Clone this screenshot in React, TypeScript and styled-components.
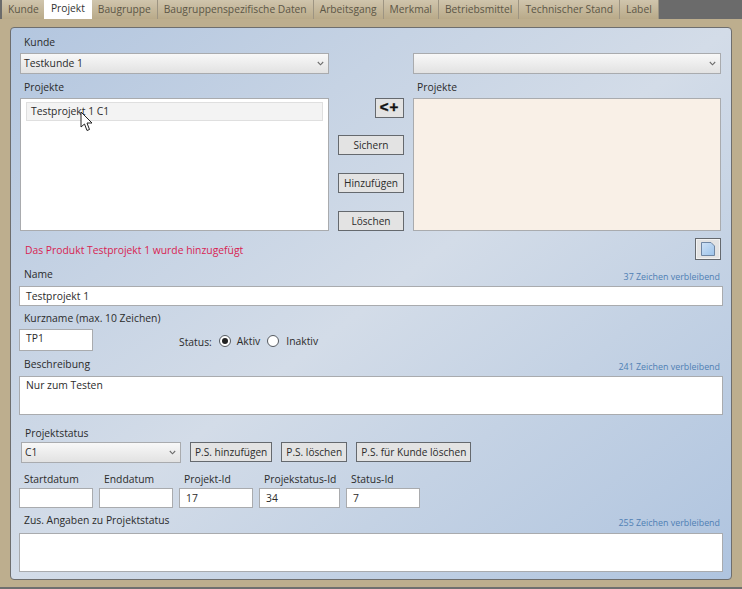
import React from "react";
import styled, { createGlobalStyle } from "styled-components";

const GlobalStyle = createGlobalStyle`
  html, body {
    margin: 0;
    padding: 0;
    height: 100%;
    overflow: hidden;
  }
  body {
    font-family: "Open Sans", "Noto Sans", sans-serif;
    font-size: 10.35px;
    color: #2b2b2b;
  }
`;

const Page = styled.div`
  width: 742px;
  height: 589px;
  background: #bdae8e;
  box-sizing: border-box;
  border-bottom: 2px solid #6f6f6f;
  position: relative;
`;

const TabBar = styled.div`
  height: 19px;
  background: #6b6b6b;
  display: flex;
  padding-left: 2px;
`;

const Tab = styled.div<{ $active?: boolean }>`
  height: 19px;
  font-size: 10.25px;
  line-height: ${(p) => (p.$active ? 17 : 18)}px;
  padding: 0 ${(p) => (p.$active ? 7 : 6)}px;
  margin: ${(p) => (p.$active ? "0 -1px 0 -2px" : "0")};
  color: ${(p) => (p.$active ? "#333" : "#5c5646")};
  background: ${(p) =>
    p.$active ? "#fff" : "linear-gradient(#d0c5ad, #b9aa89)"};
  border-right: 1px solid ${(p) => (p.$active ? "#fff" : "#9d9482")};
  white-space: nowrap;
  position: relative;
`;

const Panel = styled.div`
  margin: 8px 10px 0 10px;
  height: 553px;
  box-sizing: border-box;
  border: 1px solid #6e6e6e;
  border-radius: 4px;
  padding: 7px 8px 0 8px;
  background: linear-gradient(
    to bottom right,
    #b3c6df 0%,
    #c6d3e4 28%,
    #d3dce8 50%,
    #c4d2e4 70%,
    #afc4df 100%
  );
`;

const Label = styled.div<{ $indent?: number }>`
  height: 14px;
  line-height: 14px;
  padding-left: ${(p) => p.$indent ?? 5}px;
  white-space: nowrap;
`;

const TopGrid = styled.div`
  display: grid;
  grid-template-columns: 309px 84px 308px;
  margin-left: 1px;
`;

const Column = styled.div`
  display: flex;
  flex-direction: column;
`;

const SelectBox = styled.div<{ $width?: string; $end?: boolean }>`
  width: ${(p) => p.$width ?? "100%"};
  height: 21px;
  box-sizing: border-box;
  border: 1px solid #a9abae;
  background: linear-gradient(#f8f8f8, #e2e2e2);
  line-height: 19px;
  padding: 0 4px 0 3px;
  display: flex;
  align-items: center;
  justify-content: ${(p) => (p.$end ? "flex-end" : "space-between")};
  flex-shrink: 0;
  margin-top: ${(p) => (p.$width ? 0 : 4)}px;
`;

const SectionLabel = styled(Label)`
  margin: 6px 0 4px;
`;

const ListBox = styled.div<{ $tint?: boolean }>`
  height: 133px;
  box-sizing: border-box;
  border: 1px solid #a9abae;
  background: ${(p) => (p.$tint ? "#f9f0e7" : "#fff")};
  padding: 3px 5px;
  position: relative;
`;

const ListItem = styled.div`
  height: 19px;
  box-sizing: border-box;
  border: 1px solid #dfdfdf;
  background: #f3f3f3;
  line-height: 17px;
  padding-left: 4px;
`;

const Pointer = styled.svg`
  position: absolute;
  left: 59px;
  top: 12px;
`;

const ButtonColumn = styled.div`
  display: flex;
  flex-direction: column;
  align-items: flex-end;
  padding: 63px 9px 0 0;
`;

const Button = styled.div<{ $wide?: boolean; $gap?: number }>`
  height: 20px;
  box-sizing: border-box;
  border: 1px solid #65696e;
  background: #e3e3e3;
  font-size: 10.1px;
  line-height: 18px;
  text-align: center;
  white-space: nowrap;
  width: ${(p) => (p.$wide ? "66px" : "auto")};
  padding: ${(p) => (p.$wide ? "0" : "0 4px")};
  margin-top: ${(p) => p.$gap ?? 0}px;
  flex-shrink: 0;
`;

const AddButton = styled(Button)`
  width: 29px;
  font-family: "Liberation Sans", sans-serif;
  font-weight: 700;
  font-size: 15px;
  letter-spacing: 1px;
  color: #111;
  padding: 0;
  line-height: 16px;
  -webkit-text-stroke: 0.4px #111;
`;

const MessageRow = styled.div`
  display: flex;
  justify-content: space-between;
  align-items: center;
  height: 22px;
  margin-top: 7px;
  padding: 0 2px 0 6px;
`;

const Message = styled.div`
  color: #d81e52;
  padding-top: 2px;
`;

const NewButton = styled.div`
  width: 26px;
  height: 22px;
  box-sizing: border-box;
  border: 1px solid #65696e;
  background: #e3e3e3;
  box-shadow: inset 0 0 0 1px #f2f2f2;
  display: flex;
  align-items: center;
  justify-content: center;
`;

const HeaderRow = styled.div<{ $top: number }>`
  display: flex;
  justify-content: space-between;
  align-items: flex-end;
  height: 14px;
  margin-top: ${(p) => p.$top}px;
  padding-right: 3px;
`;

const Counter = styled.div`
  font-size: 8.9px;
  color: #4f7fb4;
  line-height: 11px;
  margin-bottom: -1px;
  white-space: nowrap;
`;

const TextField = styled.div<{ $width?: number; $height?: number; $top?: number; $line?: number }>`
  width: ${(p) => (p.$width ? `${p.$width}px` : "auto")};
  height: ${(p) => p.$height ?? 20}px;
  margin-top: ${(p) => p.$top ?? 0}px;
  box-sizing: border-box;
  border: 1px solid #a9abae;
  background: #fff;
  line-height: ${(p) => p.$line ?? 18}px;
  padding-left: 6px;
  flex-shrink: 0;
`;

const StatusRow = styled.div`
  display: flex;
  align-items: center;
  margin-top: 4px;
`;

const StatusGroup = styled.div`
  display: flex;
  align-items: center;
  margin-left: 86px;
  padding-top: 2px;
`;

const StatusCaption = styled.span`
  padding-top: 2px;
`;

const RadioDot = styled.span<{ $checked?: boolean }>`
  width: 12px;
  height: 12px;
  box-sizing: border-box;
  border-radius: 50%;
  border: 1px solid #555a60;
  background: #fff;
  display: flex;
  align-items: center;
  justify-content: center;
  margin: 0 ${(p) => (p.$checked ? 6 : 7)}px 0 7px;

  &::after {
    content: "";
    display: ${(p) => (p.$checked ? "block" : "none")};
    width: 6px;
    height: 6px;
    border-radius: 50%;
    background: #222;
  }
`;

const StatusActions = styled.div`
  display: flex;
  align-items: flex-start;
  gap: 9px;
  margin: 2px 0 0 2px;
`;

const FieldGrid = styled.div`
  display: flex;
  gap: 6px;
  margin-top: 9px;
`;

const Field = styled.div`
  display: flex;
  flex-direction: column;
  gap: 2px;
`;

const Chevron = () => (
  <svg width="7" height="5" viewBox="0 0 7 5">
    <path d="M0.8 1 L3.5 3.8 L6.2 1" fill="none" stroke="#6d6d6d" strokeWidth="1.1" />
  </svg>
);

const tabs = [
  "Kunde",
  "Projekt",
  "Baugruppe",
  "Baugruppenspezifische Daten",
  "Arbeitsgang",
  "Merkmal",
  "Betriebsmittel",
  "Technischer Stand",
  "Label",
];

const idFields = [
  { label: "Startdatum", value: "", width: 74 },
  { label: "Enddatum", value: "", width: 74 },
  { label: "Projekt-Id", value: "17", width: 74 },
  { label: "Projekstatus-Id", value: "34", width: 81 },
  { label: "Status-Id", value: "7", width: 74 },
];

export default function App() {
  return (
    <Page>
      <GlobalStyle />
      <TabBar>
        {tabs.map((t) => (
          <Tab key={t} $active={t === "Projekt"}>
            {t}
          </Tab>
        ))}
      </TabBar>
      <Panel>
        <TopGrid>
          <Column>
            <Label $indent={4}>Kunde</Label>
            <SelectBox>
              Testkunde 1 <Chevron />
            </SelectBox>
            <SectionLabel $indent={4}>Projekte</SectionLabel>
            <ListBox>
              <ListItem>Testprojekt 1 C1</ListItem>
              <Pointer width="13" height="21" viewBox="0 0 13 21">
                <path
                  d="M1 1 L1 16 L4.5 13 L7 19.5 L9.5 18.5 L7 12 L12 12 Z"
                  fill="#fff"
                  stroke="#222"
                  strokeWidth="1"
                />
              </Pointer>
            </ListBox>
          </Column>
          <ButtonColumn>
            <AddButton>&lt;+</AddButton>
            <Button $wide $gap={17}>
              Sichern
            </Button>
            <Button $wide $gap={18}>
              Hinzufügen
            </Button>
            <Button $wide $gap={18}>
              Löschen
            </Button>
          </ButtonColumn>
          <Column>
            <Label>&nbsp;</Label>
            <SelectBox $end>
              <Chevron />
            </SelectBox>
            <SectionLabel $indent={4}>Projekte</SectionLabel>
            <ListBox $tint />
          </Column>
        </TopGrid>

        <MessageRow>
          <Message>Das Produkt Testprojekt 1 wurde hinzugefügt</Message>
          <NewButton>
            <svg width="16" height="16" viewBox="0 0 16 16">
              <defs>
                <linearGradient id="sheet" x1="0" y1="0" x2="1" y2="1">
                  <stop offset="0" stopColor="#cfe2f6" />
                  <stop offset="1" stopColor="#9cc3ea" />
                </linearGradient>
              </defs>
              <path
                d="M1.5 1.5 H11 L14.5 5 V14.5 H1.5 Z"
                fill="url(#sheet)"
                stroke="#6f86a3"
              />
            </svg>
          </NewButton>
        </MessageRow>

        <HeaderRow $top={7}>
          <Label>Name</Label>
          <Counter>37 Zeichen verbleibend</Counter>
        </HeaderRow>
        <TextField $top={5}>Testprojekt 1</TextField>

        <Label style={{ marginTop: 5 }}>Kurzname (max. 10 Zeichen)</Label>
        <StatusRow>
          <TextField $width={74} $height={22} $line={17}>
            TP1
          </TextField>
          <StatusGroup>
            <StatusCaption>Status:</StatusCaption>
            <RadioDot $checked />
            Aktiv
            <RadioDot />
            Inaktiv
          </StatusGroup>
        </StatusRow>

        <HeaderRow $top={6}>
          <Label>Beschreibung</Label>
          <Counter>241 Zeichen verbleibend</Counter>
        </HeaderRow>
        <TextField $height={39} $top={5} $line={17}>
          Nur zum Testen
        </TextField>

        <Label $indent={6} style={{ marginTop: 11 }}>
          Projektstatus
        </Label>
        <StatusActions>
          <SelectBox $width="160px">
            C1 <Chevron />
          </SelectBox>
          <Button>P.S. hinzufügen</Button>
          <Button>P.S. löschen</Button>
          <Button>P.S. für Kunde löschen</Button>
        </StatusActions>

        <FieldGrid>
          {idFields.map((f) => (
            <Field key={f.label}>
              <Label>{f.label}</Label>
              <TextField $width={f.width}>{f.value}</TextField>
            </Field>
          ))}
        </FieldGrid>

        <HeaderRow $top={5}>
          <Label>Zus. Angaben zu Projektstatus</Label>
          <Counter>255 Zeichen verbleibend</Counter>
        </HeaderRow>
        <TextField $height={39} $top={6} />
      </Panel>
    </Page>
  );
}
